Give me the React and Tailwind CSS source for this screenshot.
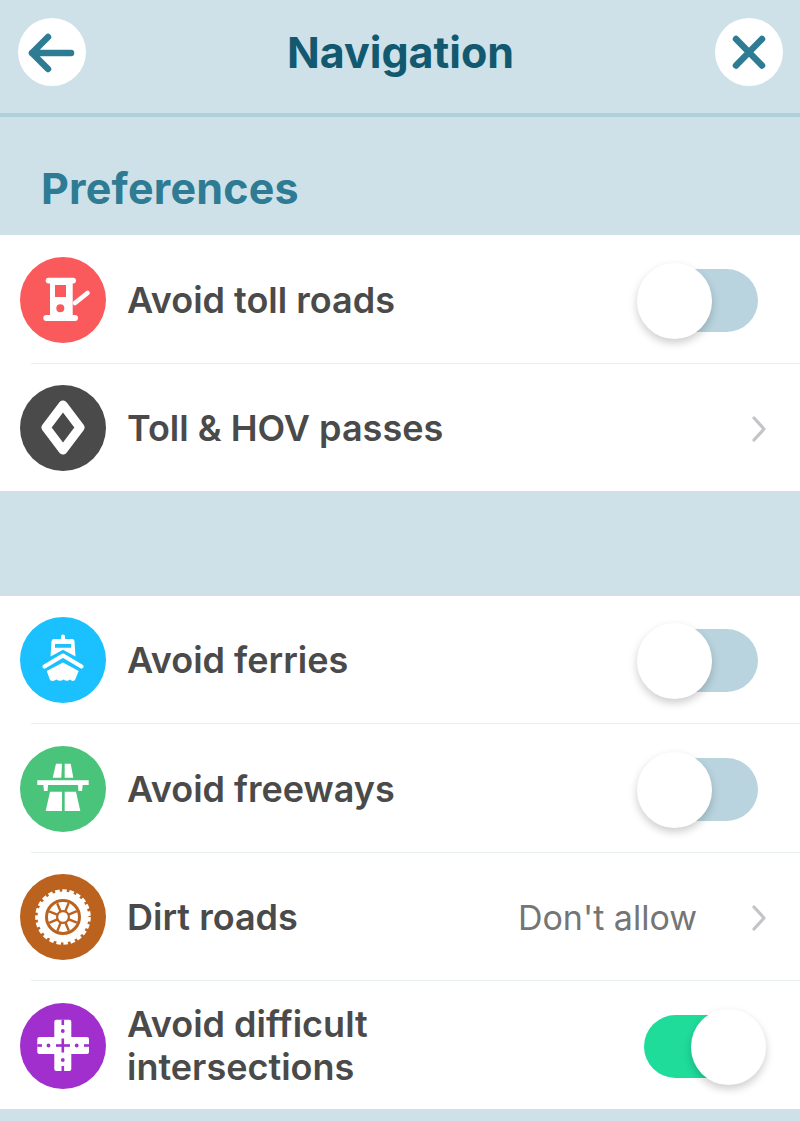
const FONT = "[font-family:Inter,'Noto_Sans',sans-serif]";

function Circle({ color, children }) {
  return (
    <svg viewBox="0 0 86 86" className={`w-[86px] h-[86px] shrink-0 ${color}`}>
      <circle cx="43" cy="43" r="43" fill="currentColor" />
      {children}
    </svg>
  );
}

function TollIcon() {
  return (
    <Circle color="text-[#fb5a5c]">
      <rect x="25.7" y="20.7" width="30.3" height="5.8" rx="2.9" fill="#fff" />
      <rect x="23.3" y="58" width="34.7" height="6" rx="3" fill="#fff" />
      <path fillRule="evenodd" fill="#fff" d="M30 24h22.7v36H30z M35 28v12h11V28z M40.3 47.3a4 4 0 1 0 0 8a4 4 0 1 0 0-8z" />
      <path d="M55 46 L67.5 36" stroke="#fff" strokeWidth="4.6" strokeLinecap="round" fill="none" />
    </Circle>
  );
}

function PassIcon() {
  return (
    <Circle color="text-[#4a4a4a]">
      <path d="M43 20 L60 42.5 L43 65 L26 42.5 Z" fill="none" stroke="#fff" strokeWidth="9" strokeLinejoin="round" />
    </Circle>
  );
}

function FerryIcon() {
  return (
    <Circle color="text-[#1bc1ff]">
      <path fill="#fff" fillRule="evenodd" d="M41 19.5a2 2 0 0 1 4 0V22h7a2.5 2.5 0 0 1 2.5 2.2L55.5 39.6 43 32.7 30.5 39.6 31.5 24.2A2.5 2.5 0 0 1 34 22h7z M35 27v3.8h16V27z" />
      <path d="M24.5 49.5 L43 38.5 L61.5 49.5" fill="none" stroke="#fff" strokeWidth="4.2" strokeLinecap="round" strokeLinejoin="round" />
      <path fill="#fff" d="M26.7 54 L43 45.5 L58.7 54 L55 63 Q52.5 65 50 62.5 Q47 65 43.5 62.5 Q40 65 36.5 62.5 Q33 65 30 63z" />
    </Circle>
  );
}

function FreewayIcon() {
  return (
    <Circle color="text-[#4ac47a]">
      <g fill="#fff">
        <path d="M36 17.7h6l-.7 14h-8.6z" />
        <path d="M44.7 17.7h6l2.6 14h-8.6z" />
        <path d="M17.3 34.3h51.4v4.7H62.7l-.7 6h-3.6l-.4-6H28l-.4 6h-3.6l-.7-6h-6z" />
        <path d="M30 45.7h12V65H25.7z" />
        <path d="M44.7 45.7H56L60.3 65H44.7z" />
      </g>
    </Circle>
  );
}

function DirtIcon() {
  const spokes = [0, 45, 90, 135];
  return (
    <Circle color="text-[#bb621f]">
      <circle cx="43" cy="43" r="25.5" fill="#fff" />
      <circle cx="43" cy="43" r="26.3" fill="none" stroke="#fff" strokeWidth="3" strokeDasharray="4.6 2.6" />
      <circle cx="43" cy="43" r="18" fill="#bb621f" />
      <circle cx="43" cy="43" r="15" fill="#fff" />
      {spokes.map((a) => (
        <rect key={a} x="41.8" y="28" width="2.4" height="30" fill="#bb621f" transform={`rotate(${a + 22} 43 43)`} />
      ))}
      <circle cx="43" cy="43" r="7" fill="#bb621f" />
      <circle cx="43" cy="43" r="4.8" fill="#fff" />
    </Circle>
  );
}

function CrossIcon() {
  return (
    <Circle color="text-[#a02fce]">
      <rect x="34.3" y="16.7" width="17" height="51.4" rx="2" fill="#fff" />
      <rect x="17.3" y="34" width="51.7" height="17" rx="2" fill="#fff" />
      <g fill="#a02fce">
        <rect x="41.5" y="16.7" width="2.6" height="5.3" />
        <rect x="41.5" y="63" width="2.6" height="5.1" />
        <rect x="17.3" y="41.2" width="4.7" height="2.6" />
        <rect x="64" y="41.2" width="5" height="2.6" />
        <circle cx="42.8" cy="28" r="1.9" />
        <circle cx="42.8" cy="57" r="1.9" />
        <circle cx="28.5" cy="42.5" r="1.9" />
        <circle cx="56.7" cy="42.5" r="1.9" />
        <rect x="41.5" y="35.5" width="2.6" height="14" />
        <rect x="36" y="41.2" width="14" height="2.6" />
      </g>
    </Circle>
  );
}

function Toggle({ on }) {
  return (
    <div className={`relative shrink-0 w-[114px] h-[63px] rounded-full ${on ? "bg-[#1fdc9b]" : "bg-[#b9d4df]"}`}>
      <div
        className={`absolute top-[-6px] w-[75px] h-[76px] rounded-full bg-white shadow-[0_4px_8px_rgba(0,0,0,0.2)] ${
          on ? "right-[-8px]" : "left-[-7px]"
        }`}
      />
    </div>
  );
}

function Chevron() {
  return (
    <svg viewBox="0 0 14 26" className="w-[14px] h-[26px]">
      <path d="M2 2 L12 13 L2 24" fill="none" stroke="#c4c4c8" strokeWidth="3.2" strokeLinecap="round" strokeLinejoin="round" />
    </svg>
  );
}

function Row({ icon, label, toggle, on, value, last, tight }) {
  return (
    <>
      <div className={`flex items-center pl-5 pt-[2px] ${tight ? "h-[127px]" : "h-[128px]"} ${toggle ? "pr-[42px]" : "pr-[34px]"}`}>
        <div className={tight ? "-mt-[2px]" : ""}>{icon}</div>
        <div className="ml-[21px] flex-1 text-[36px] leading-[43px] font-semibold text-[#4a4a4a]">
          <div className="max-w-[400px]">{label}</div>
        </div>
        {value && <span className="mr-[55px] text-[34px] text-[#757575]">{value}</span>}
        {toggle ? <Toggle on={on} /> : <Chevron />}
      </div>
      {!last && <div className="ml-[31px] h-px bg-[#e8eeee]" />}
    </>
  );
}

export default function App() {
  return (
    <div className={`min-h-[1121px] bg-[#cee1e9] overflow-hidden ${FONT}`}>
      {/* Header */}
      <div className="h-[117px] border-b-4 border-[#aed0da] flex items-start justify-between pl-[18px] pr-[17px] pt-[18px]">
        <button className="w-[68px] h-[68px] rounded-full bg-white flex items-center justify-center">
          <svg viewBox="0 0 68 68" className="w-[68px] h-[68px]">
            <path d="M14 35 H53 M30 19 L14 35 L30 51" fill="none" stroke="#2e7b94" strokeWidth="6.5" strokeLinecap="round" strokeLinejoin="round" />
          </svg>
        </button>
        <h1 className="text-[43px] leading-[68px] font-bold text-[#125970]">Navigation</h1>
        <button className="w-[68px] h-[68px] rounded-full bg-white flex items-center justify-center">
          <svg viewBox="0 0 68 68" className="w-[68px] h-[68px]">
            <path d="M21 21 L47 47.5 M47 21 L21 47.5" fill="none" stroke="#2e7b94" strokeWidth="6.5" strokeLinecap="round" />
          </svg>
        </button>
      </div>

      {/* Section title */}
      <div className="h-[118px] pl-[41px] pt-[46px]">
        <h2 className="text-[43px] leading-[50px] font-bold text-[#2e7b94] tracking-[0.2px]">Preferences</h2>
      </div>

      <div className="bg-white">
        <Row icon={<TollIcon />} label="Avoid toll roads" toggle />
        <Row icon={<PassIcon />} label="Toll & HOV passes" last tight />
      </div>

      <div className="h-[105px]" />

      <div className="bg-white">
        <Row icon={<FerryIcon />} label="Avoid ferries" toggle tight />
        <Row icon={<FreewayIcon />} label="Avoid freeways" toggle />
        <Row icon={<DirtIcon />} label="Dirt roads" value="Don't allow" tight />
        <Row icon={<CrossIcon />} label="Avoid difficult intersections" toggle on last />
      </div>
    </div>
  );
}
